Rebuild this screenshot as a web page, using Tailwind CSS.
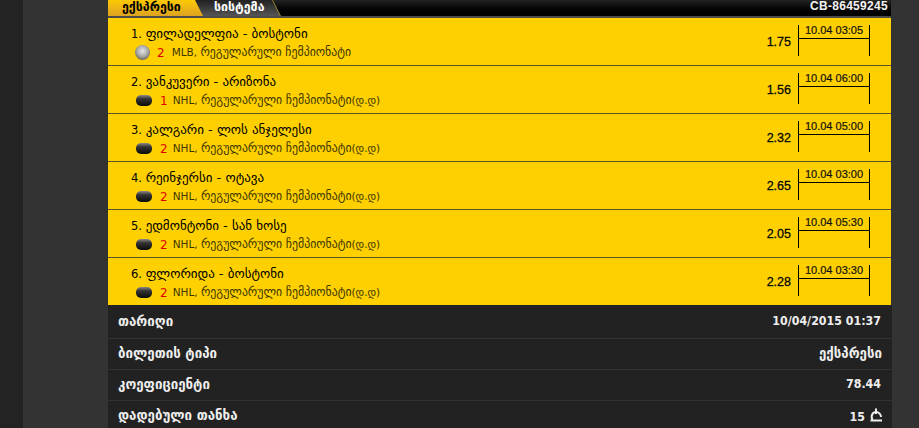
<!DOCTYPE html>
<html lang="en">
<head>
    <meta charset="UTF-8">
    <title>Ticket</title>
    <script src="https://cdn.jsdelivr.net/npm/@tailwindcss/browser@4"></script>
</head>
<body class="bg-[#333333] font-['DejaVu_Sans',sans-serif] overflow-hidden">
    <div class="flex h-[428px] overflow-hidden">
        <div class="w-[23px] shrink-0 bg-[#232323]"></div>
        <div class="w-[85px] shrink-0 bg-[#333333]"></div>

        <main class="w-[784px] shrink-0">
            <!-- Tabs -->
            <div class="w-[783px] h-[16px] flex justify-between bg-gradient-to-b from-[#242424] to-[#000000] overflow-hidden">
                <div class="flex">
                    <div class="relative z-10 w-[95px] h-[16px] bg-gradient-to-b from-[#fdc800] to-[#dea31e] [clip-path:polygon(0_0,87px_0,95px_100%,0_100%)] text-[12.4px] leading-[13px] text-black font-bold pl-[14px]">ექსპრესი</div>
                    <div class="relative -ml-[8px] w-[86px] h-[16px] bg-gradient-to-b from-[#222222] to-[#555555] [clip-path:polygon(0_0,78px_0,86px_100%,0_100%)] text-[12.4px] leading-[13px] text-white font-bold pl-[19px]">სისტემა
                        <svg class="absolute right-0 top-0" width="9" height="16"><line x1="0.5" y1="0" x2="8.5" y2="16" stroke="#a08a2a"/></svg>
                    </div>
                </div>
                <div class="font-['Liberation_Sans',sans-serif] text-[12px] leading-[12px] font-bold text-[#f2f2f2] pr-[3px] tracking-[0.3px]">CB-86459245</div>
            </div>
            <div class="w-[783px] h-[2px] bg-[#4a4a4a]"></div>

            <!-- Events -->
            <div class="w-[783px] bg-[#ffd000]">
                <div class="h-[48px] flex border-b border-[#5e5428] text-black">
                    <div class="flex-1 pl-[23px] pt-[9px]">
                        <div class="text-[11.5px] leading-[14px]">1. <span class="text-[13px]">ფილადელფია - ბოსტონი</span></div>
                        <div class="flex items-center mt-[5px] h-[14px] text-[10.5px] text-[#3d3500]">
                            <svg class="ml-[4px] -mt-[2px]" width="15" height="15" viewBox="0 0 15 15"><defs><radialGradient id="ball" cx="0.5" cy="0.4" r="0.6"><stop offset="0" stop-color="#e8e8e8"/><stop offset="0.6" stop-color="#a8a8a8"/><stop offset="1" stop-color="#6d675a"/></radialGradient></defs><circle cx="7.5" cy="7.5" r="7.5" fill="url(#ball)"/></svg>
                            <span class="ml-[7px] text-[12px] text-[#e00000]">2</span>
                            <span class="ml-[7px]">MLB, <span class="text-[11.8px]">რეგულარული ჩემპიონატი</span></span>
                        </div>
                    </div>
                    <div class="pt-[16px] pr-[7px] font-['Liberation_Sans',sans-serif] text-[12.5px] leading-[16px] text-black [-webkit-text-stroke:0.3px_#111111]">1.75</div>
                    <div class="mt-[7px] h-[31px] w-[72px] mr-[21px] border-x border-black font-['Liberation_Sans',sans-serif] text-[11px] text-[#111111] [-webkit-text-stroke:0.2px_#111111]">
                        <div class="h-[14px] leading-[11px] border-b border-black text-center">10.04 03:05</div>
                    </div>
                </div>

                <div class="h-[48px] flex border-b border-[#5e5428] text-black">
                    <div class="flex-1 pl-[23px] pt-[9px]">
                        <div class="text-[11.5px] leading-[14px]">2. <span class="text-[13px]">ვანკუვერი - არიზონა</span></div>
                        <div class="flex items-center mt-[5px] h-[14px] text-[10.5px] text-[#3d3500]">
                            <svg class="ml-[4px] -mt-[1px]" width="18" height="13" viewBox="0 0 18 13"><defs><linearGradient id="puck" x1="0" y1="0" x2="0" y2="1"><stop offset="0" stop-color="#8a8a8a"/><stop offset="0.35" stop-color="#333333"/><stop offset="1" stop-color="#0a0a0a"/></linearGradient></defs><rect x="1" y="1" width="16" height="11" rx="5" fill="url(#puck)"/></svg>
                            <span class="ml-[7px] text-[12px] text-[#e00000]">1</span>
                            <span class="ml-[5px]">NHL, <span class="text-[11.8px]">რეგულარული ჩემპიონატი</span>(დ.დ)</span>
                        </div>
                    </div>
                    <div class="pt-[16px] pr-[7px] font-['Liberation_Sans',sans-serif] text-[12.5px] leading-[16px] text-black [-webkit-text-stroke:0.3px_#111111]">1.56</div>
                    <div class="mt-[7px] h-[31px] w-[72px] mr-[21px] border-x border-black font-['Liberation_Sans',sans-serif] text-[11px] text-[#111111] [-webkit-text-stroke:0.2px_#111111]">
                        <div class="h-[14px] leading-[11px] border-b border-black text-center">10.04 06:00</div>
                    </div>
                </div>

                <div class="h-[48px] flex border-b border-[#5e5428] text-black">
                    <div class="flex-1 pl-[23px] pt-[9px]">
                        <div class="text-[11.5px] leading-[14px]">3. <span class="text-[13px]">კალგარი - ლოს ანჯელესი</span></div>
                        <div class="flex items-center mt-[5px] h-[14px] text-[10.5px] text-[#3d3500]">
                            <svg class="ml-[4px] -mt-[1px]" width="18" height="13" viewBox="0 0 18 13"><rect x="1" y="1" width="16" height="11" rx="5" fill="url(#puck)"/></svg>
                            <span class="ml-[7px] text-[12px] text-[#e00000]">2</span>
                            <span class="ml-[5px]">NHL, <span class="text-[11.8px]">რეგულარული ჩემპიონატი</span>(დ.დ)</span>
                        </div>
                    </div>
                    <div class="pt-[16px] pr-[7px] font-['Liberation_Sans',sans-serif] text-[12.5px] leading-[16px] text-black [-webkit-text-stroke:0.3px_#111111]">2.32</div>
                    <div class="mt-[7px] h-[31px] w-[72px] mr-[21px] border-x border-black font-['Liberation_Sans',sans-serif] text-[11px] text-[#111111] [-webkit-text-stroke:0.2px_#111111]">
                        <div class="h-[14px] leading-[11px] border-b border-black text-center">10.04 05:00</div>
                    </div>
                </div>

                <div class="h-[48px] flex border-b border-[#5e5428] text-black">
                    <div class="flex-1 pl-[23px] pt-[9px]">
                        <div class="text-[11.5px] leading-[14px]">4. <span class="text-[13px]">რეინჯერსი - ოტავა</span></div>
                        <div class="flex items-center mt-[5px] h-[14px] text-[10.5px] text-[#3d3500]">
                            <svg class="ml-[4px] -mt-[1px]" width="18" height="13" viewBox="0 0 18 13"><rect x="1" y="1" width="16" height="11" rx="5" fill="url(#puck)"/></svg>
                            <span class="ml-[7px] text-[12px] text-[#e00000]">2</span>
                            <span class="ml-[5px]">NHL, <span class="text-[11.8px]">რეგულარული ჩემპიონატი</span>(დ.დ)</span>
                        </div>
                    </div>
                    <div class="pt-[16px] pr-[7px] font-['Liberation_Sans',sans-serif] text-[12.5px] leading-[16px] text-black [-webkit-text-stroke:0.3px_#111111]">2.65</div>
                    <div class="mt-[7px] h-[31px] w-[72px] mr-[21px] border-x border-black font-['Liberation_Sans',sans-serif] text-[11px] text-[#111111] [-webkit-text-stroke:0.2px_#111111]">
                        <div class="h-[14px] leading-[11px] border-b border-black text-center">10.04 03:00</div>
                    </div>
                </div>

                <div class="h-[48px] flex border-b border-[#5e5428] text-black">
                    <div class="flex-1 pl-[23px] pt-[9px]">
                        <div class="text-[11.5px] leading-[14px]">5. <span class="text-[13px]">ედმონტონი - სან ხოსე</span></div>
                        <div class="flex items-center mt-[5px] h-[14px] text-[10.5px] text-[#3d3500]">
                            <svg class="ml-[4px] -mt-[1px]" width="18" height="13" viewBox="0 0 18 13"><rect x="1" y="1" width="16" height="11" rx="5" fill="url(#puck)"/></svg>
                            <span class="ml-[7px] text-[12px] text-[#e00000]">2</span>
                            <span class="ml-[5px]">NHL, <span class="text-[11.8px]">რეგულარული ჩემპიონატი</span>(დ.დ)</span>
                        </div>
                    </div>
                    <div class="pt-[16px] pr-[7px] font-['Liberation_Sans',sans-serif] text-[12.5px] leading-[16px] text-black [-webkit-text-stroke:0.3px_#111111]">2.05</div>
                    <div class="mt-[7px] h-[31px] w-[72px] mr-[21px] border-x border-black font-['Liberation_Sans',sans-serif] text-[11px] text-[#111111] [-webkit-text-stroke:0.2px_#111111]">
                        <div class="h-[14px] leading-[11px] border-b border-black text-center">10.04 05:30</div>
                    </div>
                </div>

                <div class="h-[47px] flex text-black">
                    <div class="flex-1 pl-[23px] pt-[9px]">
                        <div class="text-[11.5px] leading-[14px]">6. <span class="text-[13px]">ფლორიდა - ბოსტონი</span></div>
                        <div class="flex items-center mt-[5px] h-[14px] text-[10.5px] text-[#3d3500]">
                            <svg class="ml-[4px] -mt-[1px]" width="18" height="13" viewBox="0 0 18 13"><rect x="1" y="1" width="16" height="11" rx="5" fill="url(#puck)"/></svg>
                            <span class="ml-[7px] text-[12px] text-[#e00000]">2</span>
                            <span class="ml-[5px]">NHL, <span class="text-[11.8px]">რეგულარული ჩემპიონატი</span>(დ.დ)</span>
                        </div>
                    </div>
                    <div class="pt-[16px] pr-[7px] font-['Liberation_Sans',sans-serif] text-[12.5px] leading-[16px] text-black [-webkit-text-stroke:0.3px_#111111]">2.28</div>
                    <div class="mt-[7px] h-[31px] w-[72px] mr-[21px] border-x border-black font-['Liberation_Sans',sans-serif] text-[11px] text-[#111111] [-webkit-text-stroke:0.2px_#111111]">
                        <div class="h-[14px] leading-[11px] border-b border-black text-center">10.04 03:30</div>
                    </div>
                </div>
            </div>

            <!-- Summary -->
            <div class="h-[123px] bg-[#222222] text-[12.3px] font-bold text-[#eeeeee]">
                <div class="h-[34px] pt-[9px] leading-[15px] flex justify-between px-[10px] border-b border-[#333333]"><span class="text-[13.3px]">თარიღი</span><span class="pr-[1px] font-['DejaVu_Sans_Condensed',sans-serif]">10/04/2015 01:37</span></div>
                <div class="h-[31px] pt-[7px] leading-[15px] flex justify-between px-[10px] border-b border-[#333333]"><span class="text-[13.3px]">ბილეთის ტიპი</span><span class="text-[13.3px]">ექსპრესი</span></div>
                <div class="h-[31px] pt-[7px] leading-[15px] flex justify-between px-[10px] border-b border-[#333333]"><span class="text-[13.3px]">კოეფიციენტი</span><span class="pr-[1px] font-['DejaVu_Sans_Condensed',sans-serif]">78.44</span></div>
                <div class="h-[27px] pt-[7px] leading-[15px] flex justify-between px-[10px]"><span class="text-[13.3px]">დადებული თანხა</span>
                    <span class="flex items-center gap-[5px] h-[18px] font-['DejaVu_Sans_Condensed',sans-serif]">15
                        <svg class="-mt-[4px]" width="12" height="14" viewBox="0 0 12 14" fill="none" stroke="#eeeeee" stroke-width="2"><path d="M2.5 12 C0.5 8 2.5 4 6 4 C9 4 11 6.5 11 9"/><path d="M6 0.5 V6"/><path d="M0.5 12.5 H12"/></svg>
                    </span>
                </div>
            </div>
        </main>
    </div>
</body>
</html>
